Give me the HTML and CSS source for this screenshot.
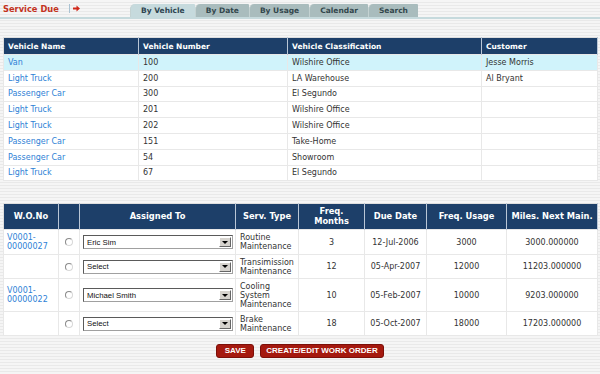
FILE: index.html
```html
<!DOCTYPE html>
<html>
<head>
<meta charset="utf-8">
<title>Service Due</title>
<link rel="stylesheet" href="styles.css">
</head>
<body>
<div class="topbar">
  <div class="title">
    <span class="title-text">Service Due</span>
    <span class="sep"></span>
    <svg class="arrow" width="7" height="7" viewBox="0 0 7 7"><path d="M0 2.5h3.5V0.5L7 3.5 3.5 6.5V4.5H0z" fill="#d0281a"/></svg>
  </div>
  <div class="tabs">
    <span class="tab active">By Vehicle</span>
    <span class="tab">By Date</span>
    <span class="tab">By Usage</span>
    <span class="tab">Calendar</span>
    <span class="tab">Search</span>
  </div>
</div>

<table class="grid vehicles">
  <colgroup><col class="c1"><col class="c2"><col class="c3"><col class="c4"></colgroup>
  <thead>
    <tr><th>Vehicle Name</th><th>Vehicle Number</th><th>Vehicle Classification</th><th>Customer</th></tr>
  </thead>
  <tbody>
    <tr class="sel"><td><a>Van</a></td><td>100</td><td>Wilshire Office</td><td>Jesse Morris</td></tr>
    <tr><td><a>Light Truck</a></td><td>200</td><td>LA Warehouse</td><td>Al Bryant</td></tr>
    <tr><td><a>Passenger Car</a></td><td>300</td><td>El Segundo</td><td></td></tr>
    <tr><td><a>Light Truck</a></td><td>201</td><td>Wilshire Office</td><td></td></tr>
    <tr><td><a>Light Truck</a></td><td>202</td><td>Wilshire Office</td><td></td></tr>
    <tr><td><a>Passenger Car</a></td><td>151</td><td>Take-Home</td><td></td></tr>
    <tr><td><a>Passenger Car</a></td><td>54</td><td>Showroom</td><td></td></tr>
    <tr><td><a>Light Truck</a></td><td>67</td><td>El Segundo</td><td></td></tr>
  </tbody>
</table>

<table class="grid orders">
  <colgroup><col class="w1"><col class="w2"><col class="w3"><col class="w4"><col class="w5"><col class="w6"><col class="w7"><col class="w8"></colgroup>
  <thead>
    <tr><th>W.O.No</th><th></th><th>Assigned To</th><th>Serv. Type</th><th>Freq.<br>Months</th><th>Due Date</th><th>Freq. Usage</th><th>Miles. Next Main.</th></tr>
  </thead>
  <tbody>
    <tr class="first">
      <td class="wo"><a>V0001-<br>00000027</a></td>
      <td class="rc"><span class="radio"></span></td>
      <td><div class="select"><span class="val">Eric Sim</span><span class="btn"></span></div></td>
      <td class="st">Routine<br>Maintenance</td>
      <td class="num">3</td><td class="num">12-Jul-2006</td><td class="num">3000</td><td class="num">3000.000000</td>
    </tr>
    <tr>
      <td class="wo"></td>
      <td class="rc"><span class="radio"></span></td>
      <td><div class="select"><span class="val">Select</span><span class="btn"></span></div></td>
      <td class="st">Transimission<br>Maintenance</td>
      <td class="num">12</td><td class="num">05-Apr-2007</td><td class="num">12000</td><td class="num">11203.000000</td>
    </tr>
    <tr class="tall">
      <td class="wo"><a>V0001-<br>00000022</a></td>
      <td class="rc"><span class="radio"></span></td>
      <td><div class="select"><span class="val">Michael Smith</span><span class="btn"></span></div></td>
      <td class="st">Cooling<br>System<br>Maintenance</td>
      <td class="num">10</td><td class="num">05-Feb-2007</td><td class="num">10000</td><td class="num">9203.000000</td>
    </tr>
    <tr>
      <td class="wo"></td>
      <td class="rc"><span class="radio"></span></td>
      <td><div class="select"><span class="val">Select</span><span class="btn"></span></div></td>
      <td class="st">Brake<br>Maintenance</td>
      <td class="num">18</td><td class="num">05-Oct-2007</td><td class="num">18000</td><td class="num">17203.000000</td>
    </tr>
  </tbody>
</table>

<div class="actions">
  <button class="button save">SAVE</button>
  <button class="button">CREATE/EDIT WORK ORDER</button>
</div>
</body>
</html>
```

FILE: styles.css
```css
html, body {
  margin: 0;
  padding: 0;
}
body {
  width: 600px;
  height: 374px;
  overflow: hidden;
  background: repeating-linear-gradient(to bottom, #f5f5f5 0, #f5f5f5 2px, #e9e9e9 2px, #e9e9e9 3px);
  font-family: "DejaVu Sans", Verdana, sans-serif;
  font-size: 8px;
  color: #333;
}
.topbar {
  display: flex;
  align-items: flex-end;
  height: 17px;
  border-bottom: 2px solid #c6dadd;
}
.title {
  width: 130px;
  height: 17px;
  box-sizing: border-box;
  padding-left: 3px;
  display: flex;
  align-items: center;
}
.title-text {
  color: #c3321d;
  font-weight: bold;
  font-size: 8.3px;
}
.sep {
  width: 1px;
  height: 9px;
  background: #a9c2d2;
  margin-left: 10px;
}
.arrow {
  margin-left: 3px;
}
.tabs {
  display: flex;
}
.tab {
  height: 13px;
  line-height: 13px;
  padding: 0 10px;
  font-size: 7.5px;
  font-weight: bold;
  color: #33474c;
  background: #a9bcbd;
  border-top-left-radius: 5px;
  border-top-right-radius: 1px;
  border-left: 1px solid #c4d2d2;
}
.tab.active {
  background: #c6dadd;
  color: #2e4450;
}
.grid {
  border-collapse: collapse;
  table-layout: fixed;
  background: #fff;
  margin-left: 3px;
  width: 595px;
  border: 1px solid #dedede;
}
.grid th {
  background: #1d3f69;
  color: #fff;
  font-weight: bold;
  border-right: 1px solid #b9c6d6;
  padding: 0 4px;
}
.grid td {
  border: 1px solid #e8e8e8;
  padding: 0 4px;
}
.grid a {
  color: #2e7fd6;
}
.vehicles {
  margin-top: 18px;
}
.vehicles th {
  height: 16px;
  text-align: left;
  font-size: 7.5px;
}
.vehicles td {
  height: 14.8px;
}
.vehicles tr.sel td {
  background: #d0f3fb;
}
.c1 { width: 135px; }
.c2 { width: 149px; }
.c3 { width: 194px; }
.c4 { width: 116px; }

.orders {
  margin-top: 22px;
}
.orders th {
  height: 25px;
  text-align: center;
  font-size: 8.3px;
  line-height: 9.5px;
}
.orders td {
  height: 23px;
  line-height: 9px;
}
.orders tr.first td {
  height: 24px;
}
.orders tr.tall td {
  height: 32px;
}
.orders td.wo {
  padding-left: 3px;
}
.orders td.rc {
  text-align: center;
  padding: 0;
}
.orders td.st {
  padding: 0 2px 0 4px;
}
.orders td.num {
  text-align: center;
}
.w1 { width: 55px; }
.w2 { width: 21px; }
.w3 { width: 156px; }
.w4 { width: 63px; }
.w5 { width: 66px; }
.w6 { width: 62px; }
.w7 { width: 80px; }
.w8 { width: 91px; }

.radio {
  display: inline-block;
  width: 8px;
  height: 8px;
  box-sizing: border-box;
  border-radius: 50%;
  border: 1px solid #8a8a8a;
  border-right-color: #d8d8d8;
  border-bottom-color: #d8d8d8;
  background: #fff;
  vertical-align: middle;
}
.select {
  display: flex;
  align-items: center;
  justify-content: space-between;
  width: 150px;
  height: 14px;
  box-sizing: border-box;
  margin-left: -1px;
  border: 1px solid #a0a0a0;
  border-top-color: #5a5a5a;
  border-left-color: #5a5a5a;
  background: #fff;
  padding: 0 1px 0 3px;
  font-family: "Liberation Sans", Arial, sans-serif;
  font-size: 7.8px;
  color: #111;
}
.btn {
  width: 12px;
  height: 10px;
  box-sizing: border-box;
  background: #d6d3ce;
  border: 1px solid #fff;
  border-right-color: #666;
  border-bottom-color: #666;
  display: flex;
  align-items: center;
  justify-content: center;
}
.btn::after {
  content: "";
  border-left: 3px solid transparent;
  border-right: 3px solid transparent;
  border-top: 3px solid #000;
}
.actions {
  display: flex;
  justify-content: center;
  gap: 6px;
  margin-top: 8px;
}
.button {
  height: 14px;
  padding: 0 5px;
  margin: 0;
  background: #a5190f;
  border: 1px solid #7c0f09;
  border-radius: 3px;
  color: #fff;
  font-family: "Liberation Sans", Arial, sans-serif;
  font-size: 8px;
  font-weight: bold;
  line-height: 12px;
}
.button.save {
  min-width: 38px;
}
```
